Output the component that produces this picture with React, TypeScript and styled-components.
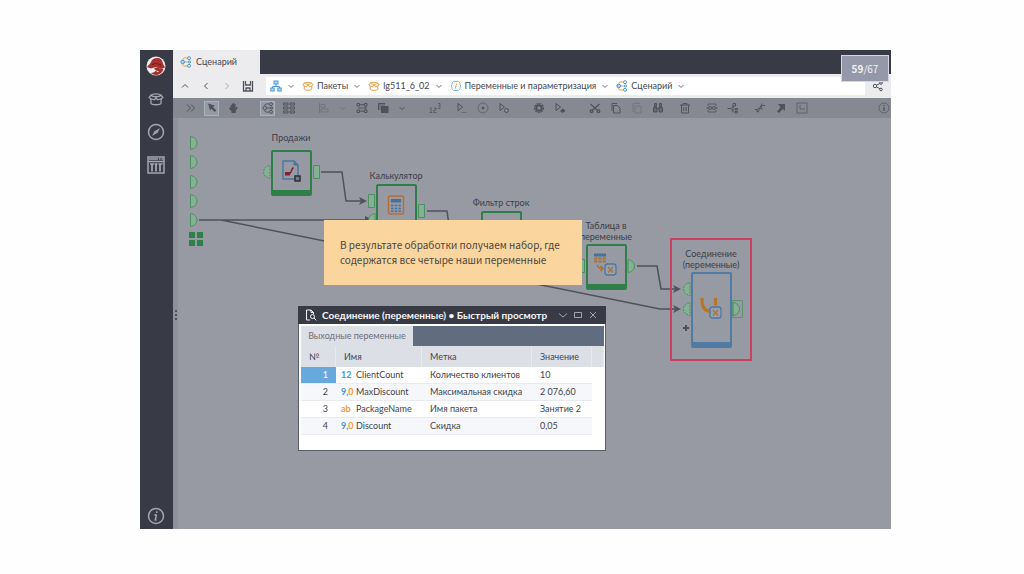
import React from 'react';
import styled, { createGlobalStyle, css } from 'styled-components';

const c = {
  dark: '#383a45',
  canvas: '#979aa3',
  toolbar: '#868991',
  ink: '#4f525d',
  label: '#3b3d47',
  green: '#2f8048',
  port: '#84b094',
  orange: '#e9a04c',
  blue: '#4b97cf',
};

const GlobalStyle = createGlobalStyle`
  *, *::before, *::after { box-sizing: border-box; }
  body {
    margin: 0;
    background: #fefefe;
    font-family: Lato, "Noto Sans", sans-serif;
    font-size: 9px;
    line-height: 12px;
    color: #44464f;
  }
  button { font: inherit; color: inherit; border: 0; background: none; padding: 0; cursor: pointer; }
  svg { display: block; flex: none; }
`;

const Slide = styled.main`
  min-height: 100vh;
  padding: 50px 133px 45px 140px;
  display: flex;
`;

const Shell = styled.div`
  position: relative;
  flex: 1;
  min-width: 0;
  display: flex;
  background: ${c.canvas};
`;

const Sidebar = styled.nav`
  flex: none;
  width: 33px;
  padding: 6px 1px 3px 0;
  display: flex;
  flex-direction: column;
  align-items: center;
  gap: 13px;
  background: ${c.dark};
  color: #a3a6b0;
`;

const SideButton = styled.button<{ $last?: boolean }>`
  width: 20px;
  height: 20px;
  display: grid;
  place-items: center;
  ${p => p.$last && css`margin-top: auto;`}
`;

const Main = styled.div`
  flex: 1;
  min-width: 0;
  display: flex;
  flex-direction: column;
`;

const TabBar = styled.div`
  height: 24px;
  display: flex;
  background: ${c.dark};
`;

const ScenarioTab = styled.button`
  width: 87px;
  padding: 0 7px;
  display: flex;
  align-items: center;
  gap: 4px;
  background: #ececee;
`;

const NavBar = styled.div`
  height: 24px;
  padding: 3px 0 3px 4px;
  display: flex;
  align-items: center;
  background: #ececee;
`;

const NavButton = styled.button<{ $faded?: boolean }>`
  width: 15px;
  height: 15px;
  margin-right: 6px;
  display: grid;
  place-items: center;
  color: ${p => (p.$faded ? '#a9abb1' : '#50535d')};
`;

const Crumbs = styled.div`
  flex: 1;
  height: 18px;
  margin: 0 5px 0 5px;
  padding-left: 4px;
  display: flex;
  align-items: center;
  gap: 7px;
  background: #fff;
`;

const Crumb = styled.button`
  display: flex;
  align-items: center;
  gap: 3px;
  white-space: nowrap;
`;

const CrumbChevron = styled.span`
  margin-left: 2px;
  color: #6c6f78;
`;

const Toolbar = styled.div`
  height: 20px;
  padding: 0 0 0 10px;
  display: flex;
  align-items: center;
  gap: 6px;
  background: ${c.toolbar};
  color: ${c.ink};
`;

const Tool = styled.button<{ $gap?: number; $boxed?: boolean; $faded?: boolean; $narrow?: boolean; $end?: boolean }>`
  flex: none;
  width: ${p => (p.$narrow ? 11 : 15)}px;
  height: 15px;
  margin-left: ${p => (p.$end ? 'auto' : `${p.$gap ?? 0}px`)};
  display: grid;
  place-items: center;
  opacity: ${p => (p.$faded ? 0.35 : 1)};
  ${p => p.$boxed && css`
    background: #969aa3;
    outline: 1px solid #a6b3bd;
    outline-offset: -1px;
  `}
`;

const Workspace = styled.div`
  flex: 1;
  display: flex;
`;

const Grip = styled.div`
  flex: none;
  width: 5px;
  padding-bottom: 18px;
  display: grid;
  place-items: center;
  background: #8f929b;
  color: ${c.ink};
`;

const Canvas = styled.div`
  position: relative;
  flex: 1;
  min-width: 0;
`;

const Wires = styled.svg`
  position: absolute;
  left: 0;
  top: 0;
`;

const Node = styled.div<{ $x: number; $y: number; $gap?: number }>`
  position: absolute;
  left: ${p => p.$x}px;
  bottom: calc(100% - ${p => p.$y}px);
  width: 80px;
  display: flex;
  flex-direction: column;
  align-items: center;
  gap: ${p => p.$gap ?? 3}px;
  color: ${c.label};
`;

const NodeLabel = styled.div`
  line-height: 11px;
  text-align: center;
  white-space: pre;
`;

const NodeBox = styled.div<{ $tall?: boolean }>`
  width: 41px;
  height: ${p => (p.$tall ? 76 : 46)}px;
  display: grid;
  place-items: center;
  border: 2px solid ${p => (p.$tall ? '#4f7ba5' : c.green)};
  border-bottom-width: 6px;
  border-radius: 2px;
`;

const Highlight = styled.div`
  position: absolute;
  left: 492px;
  top: 120px;
  width: 82px;
  height: 123px;
  border: 2px solid #c9415f;
`;

const Callout = styled.p`
  position: absolute;
  left: 146px;
  top: 102px;
  width: 258px;
  height: 65px;
  margin: 0;
  padding: 17px 16px;
  background: #fad59e;
  color: #4b4740;
  font-family: "Noto Sans CJK SC", "Noto Sans", sans-serif;
  font-size: 10px;
  line-height: 15px;
  white-space: nowrap;
`;

const Counter = styled.div`
  position: absolute;
  right: 2px;
  top: 5px;
  width: 48px;
  height: 27px;
  display: flex;
  align-items: center;
  justify-content: center;
  border: 1px solid #d5d7e0;
  background: #9498a9;
  color: #f2f3f6;
  font-family: "Noto Sans CJK SC", "Noto Sans", sans-serif;
  font-size: 10px;
`;

const QuickView = styled.section`
  position: absolute;
  left: 120px;
  top: 188px;
  width: 308px;
  height: 145px;
  border: 1px solid #5a5d69;
  border-top: 0;
  background: #fff;
`;

const QuickHeader = styled.header`
  height: 18px;
  margin: 0 -1px;
  padding: 0 8px 0 7px;
  display: flex;
  align-items: center;
  gap: 5px;
  background: ${c.dark};
  color: #f4f5f8;
`;

const QuickTitle = styled.h2`
  flex: 1;
  margin: 0;
  font-size: 10px;
  font-weight: 700;
  line-height: 16px;
  white-space: nowrap;
`;

const WindowButton = styled.button`
  width: 10px;
  height: 14px;
  display: grid;
  place-items: center;
  color: #a3a5ae;
`;

const QuickTabs = styled.div`
  height: 20px;
  margin: 2px 1px 0 2px;
  display: flex;
  background: #616c80;
`;

const QuickTab = styled.button`
  width: 112px;
  background: #dddfe6;
  color: #6b6e78;
  white-space: nowrap;
`;

const Table = styled.table`
  width: calc(100% - 3px);
  margin: 0 1px 0 2px;
  border-collapse: separate;
  border-spacing: 0;
  table-layout: fixed;
  color: #42444c;
`;

const Th = styled.th<{ $w?: number }>`
  width: ${p => (p.$w ? `${p.$w}px` : 'auto')};
  height: 21px;
  padding: 0 8px;
  text-align: left;
  font-weight: 400;
  background: #dddfe7;
  border-right: 1px solid #e8eaef;
`;

const Row = styled.tr`
  &:nth-child(even) td:not(:last-child) { background: #f5f7fa; }
`;

const Td = styled.td<{ $selected?: boolean; $number?: boolean; $filler?: boolean }>`
  height: 17px;
  padding: 0 ${p => (p.$filler ? 0 : 8)}px 0;
  border-bottom: ${p => (p.$filler ? 'none' : '1px solid #e9ebee')};
  white-space: nowrap;
  ${p => p.$number && css`text-align: right;`}
  ${p => p.$selected && css`background: #67a9dd; color: #fff;`}
`;

const NameCell = styled.div`
  display: flex;
  align-items: center;
  margin-left: -3px;
`;

const TypeMark = styled.span`
  width: 15px;
  font-weight: 700;
`;

const Tint = styled.span<{ $color: string }>`
  color: ${p => p.$color};
`;

type IconProps = { children: React.ReactNode; size?: number; box?: number; w?: number };
const Icon = ({ children, size = 12, box = 12, w = 1 }: IconProps) => (
  <svg width={size} height={size} viewBox={`0 0 ${box} ${box}`} fill="none" stroke="currentColor" strokeWidth={w} aria-hidden="true">
    {children}
  </svg>
);

const Chevron = ({ d = 'M1.5 3 4 5.5 6.5 3' }: { d?: string }) => <Icon size={8} box={8}><path d={d} /></Icon>;

const FlowIcon = ({ plain }: { plain?: boolean }) => (
  <Icon>
    <path d="M2.500 3.800C3 2 4.500 1.500 7 2M5 6h3M2.500 8.200c.5 1.800 2 2.300 4.500 1.800" stroke={plain ? 'currentColor' : c.orange} />
    <g stroke={plain ? 'currentColor' : c.blue}>
      <circle cx="2.700" cy="6" r="1.800" fill={plain ? 'none' : '#a9d3f0'} />
      <circle cx="9" cy="2.200" r="1.500" />
      <circle cx="9.500" cy="6" r="1.100" />
      <circle cx="9" cy="9.800" r="1.500" />
    </g>
  </Icon>
);

const BoxIcon = ({ color = 'currentColor', size = 12 }: { color?: string; size?: number }) => (
  <Icon size={size}>
    <g stroke={color} strokeLinejoin="round" strokeLinecap="round">
      <path d="M2.200 6v3.200C3 10.700 9 10.700 9.800 9.200V6" />
      <path d="M2.200 3.200C3.500 1.800 8.500 1.800 9.800 3.200" />
      <path d="M2.200 3.200.8 5c1 1.200 3 1.500 4.200 1.400L6 4.900l1 1.500c1.200.1 3.200-.2 4.200-1.400L9.800 3.200C8.500 4.700 3.500 4.700 2.200 3.200z" />
    </g>
  </Icon>
);

const TreeIcon = () => (
  <Icon>
    <g stroke={c.blue}>
      <rect x="4" y="1" width="4" height="3" fill="#bcdcf2" />
      <path d="M6 4v2.500M2.500 8V6.500h7V8" />
      <rect x=".8" y="8" width="3.400" height="3" fill="#bcdcf2" />
      <rect x="7.800" y="8" width="3.400" height="3" fill="#bcdcf2" />
    </g>
  </Icon>
);

const ModuleIcon = () => (
  <Icon>
    <path d="M3.500 1.500h5L10 3v2l1 1-1 1v2l-1.500 1.500h-5L2 9V7L1 6l1-1V3z" stroke="#86bde3" />
    <path d="M6.800 3.500 5.200 8.500" stroke={c.orange} />
  </Icon>
);

const Logo = () => (
  <svg width="20" height="20" viewBox="0 0 20 20" aria-hidden="true">
    <circle cx="10" cy="10" r="9.500" fill="#f1eeee" />
    <path d="M1 11C2 9 4 8.500 5 6c1-3 4-4.500 7-4 3.500.5 4.500 3 5 5.500.3 1.500 1.500 2.500 2 4l-4 1.500-5-2-5 1.500z" fill="#a8302c" />
    <path d="M8 12.500c2-1.500 4-1 6 0l3.500.5c-1 3.500-4 6-7.500 6-2 0-4-1-5-2 2 0 4-1 5-2.500z" fill="#a33531" />
    <path d="M6 8.500c3-1.500 6-1 9 .5" stroke="#6f1a19" fill="none" />
    <path d="m10 14.500 3 .8-1.500 1z" fill="#f1eeee" />
  </svg>
);

const Compass = () => (
  <Icon size={18} box={18} w={1.5}>
    <circle cx="9" cy="9" r="7.500" />
    <path d="m13 5-2.700 5.300L8 8z M5 13l2.700-5.300L10 10z" fill="currentColor" stroke="none" />
  </Icon>
);

const Report = () => (
  <Icon size={18} box={18} w={1.5}>
    <rect x="1" y="1" width="16" height="16" />
    <path d="M2 3h9M12 3h1.500M14.500 3H16" strokeWidth="1.500" />
    <path d="M1 5.500h16" />
    <path d="M5 8v7.500M9 8v7.500M13 8v7.500" strokeWidth="1.800" />
    <path d="M3 8h4M7.500 8h3M11.500 8h4" />
  </Icon>
);

const Save = () => (
  <Icon size={12}>
    <path d="M1.500 1v10h9V1M3.500 1v4h5V1M4 11V8h4v3" strokeWidth="1.300" />
  </Icon>
);

const Share = () => (
  <Icon size={12}>
    <circle cx="3" cy="6" r="1.700" />
    <circle cx="9" cy="3" r="1.300" />
    <circle cx="9" cy="9.500" r="1.300" />
    <path d="m4.500 5.200 3.300-1.600M4.500 6.900 8 8.800" />
  </Icon>
);

type ToolItem = { name: string; icon: React.ReactNode; gap?: number; boxed?: boolean; faded?: boolean; narrow?: boolean; end?: boolean };

const tools: ToolItem[] = [
  { name: 'Развернуть', icon: <Icon><path d="m2 2.500 3.500 3.500L2 9.500M6 2.500 9.500 6 6 9.500" /></Icon> },
  { name: 'Выделение', boxed: true, icon: <Icon><path d="M2 1.500 9 3.800 7 5l3.300 3.500-1.600 1.600L5.400 6.800 4.200 8.700z" fill="currentColor" stroke="none" /></Icon> },
  { name: 'Перемещение', icon: <Icon><path d="M3.500 6V3.200h1.200V1.700h1.300V1h1.300v1h1.200v3.500l1.500-.7.700.7-2 3.500v2H4.500V9.200L2 6.500l.7-1z" fill="currentColor" stroke="none" /></Icon> },
  { name: 'Схема', gap: 14, boxed: true, icon: <FlowIcon plain /> },
  { name: 'Список', icon: <Icon><path d="M.5 1h4.500v2H.5zM7 1h4.500v2H7zM.5 5h4.500v2H.5zM7 5h4.500v2H7zM.5 9h4.500v2H.5zM7 9h4.500v2H7z" /></Icon> },
  { name: 'Выравнивание', gap: 14, faded: true, icon: <Icon><path d="M1.500 1v10M3 2.500h4v3H3zM3 7h7v3H3z" /></Icon> },
  { name: 'Варианты выравнивания', narrow: true, faded: true, icon: <Chevron /> },
  { name: 'Упорядочить', icon: <Icon><path d="M1 1.500h2.500V4H1zM8.500 1.500H11V4H8.500zM1 8h2.500v2.500H1zM8.500 8H11v2.500H8.500zM3.500 2.700h5M3.500 9.200h5M2.200 6h7.600M9.800 4v4" /></Icon> },
  { name: 'Слои', icon: <Icon><path d="M1.500 8V1.500H8" /><path d="M2 2h6v2H4v4H2z" fill="currentColor" opacity=".4" stroke="none" /><rect x="4.500" y="4.500" width="6.500" height="6" fill="currentColor" /></Icon> },
  { name: 'Варианты слоёв', narrow: true, icon: <Chevron /> },
  { name: 'Порядок выполнения', gap: 14, icon: <Icon><path d="M2 5.500v5M.5 10.500h3M5 6h2v2H5v2.500h2.500M9 1.500h2v5H9M9.500 4H11M1 6.500 2 5.500" opacity=".8" /></Icon> },
  { name: 'Выполнить', gap: 6, icon: <Icon><path d="M2 1.500v7l4.500-3.500zM5.500 10.500h1M7.500 10.500h1M9.500 10.500h1" /></Icon> },
  { name: 'Остановить', icon: <Icon><circle cx="6" cy="6" r="5" opacity=".6" /><circle cx="6" cy="6" r="1" fill="currentColor" /></Icon> },
  { name: 'Переобучить', icon: <Icon><path d="M2 1.500v7l4.500-3.500z" /><circle cx="8.500" cy="8.500" r="2" /></Icon> },
  { name: 'Настроить', gap: 14, icon: <Icon><circle cx="6" cy="6" r="4.500" strokeWidth="1.200" strokeDasharray="2 1" /><circle cx="6" cy="6" r="2.800" strokeWidth="2" /></Icon> },
  { name: 'Режим активации', icon: <Icon><path d="M2 1.500v7l4.500-3.500z" /><path d="M6.500 9 9 6.800l2 2-2.500 1.700z" fill="currentColor" /></Icon> },
  { name: 'Вырезать', gap: 14, icon: <Icon w={1.3}><path d="m1.500 2 7.200 6.500M10.500 2 3.300 8.500" /><circle cx="2.500" cy="9.200" r="1.300" /><circle cx="9.500" cy="9.200" r="1.300" /></Icon> },
  { name: 'Копировать', icon: <Icon><path d="M3.500 3.500h4L10 6v5H3.500zM2 9V1.500h5" /></Icon> },
  { name: 'Вставить', faded: true, icon: <Icon><path d="M4 4h6v7H4zM2 10V1.500h7" /></Icon> },
  { name: 'Найти', icon: <Icon><path d="M2.500 1.500h2v3h-2zM7.500 1.500h2v3h-2zM1.500 5.500H5V10H1.500zM7 5.500h3.500V10H7zM5 6.500h2" fill="currentColor" fillOpacity=".6" /></Icon> },
  { name: 'Удалить', gap: 6, icon: <Icon><path d="M1 3h10M4 3V1.500h4V3M2.500 3v8h7V3M4.800 5v4M7.200 5v4" /></Icon> },
  { name: 'Подмодель', gap: 6, icon: <Icon><path d="M2 4V2h8v2M2 8v2h8V8" opacity=".8" /><circle cx="4" cy="6" r="1.500" /><circle cx="8" cy="6" r="1.500" /><path d="M0 6h2.500M5.500 6h1M9.500 6H12" /></Icon> },
  { name: 'Развернуть подмодель', icon: <Icon><path d="M.5 6.500h3.500M4 6.500 6 4.500M6 1.500h2.500V4H6zM6 4v4M4 8h2v2.500M8 6.500h2.500v1.500H8zM8 9.500h2.500V11H8z" /></Icon> },
  { name: 'Разорвать связь', gap: 6, icon: <Icon><path d="M1 7.500h2.500L5 5.500M7 5l1.500-1.500H11M4 10.500l4-9M3 7.500v2h2M7 5v2h1.500" /></Icon> },
  { name: 'Ссылка', icon: <Icon><path d="M3 2h7v7L8 7l-4 4-2-1.500L5.500 5.200z" fill="currentColor" stroke="none" /></Icon> },
  { name: 'Область', icon: <Icon><path d="M1 1h10v10H1z" opacity=".7" /><path d="M4 3v4h5" opacity=".7" /></Icon> },
  { name: 'Сведения', end: true, icon: <Icon><circle cx="6" cy="6" r="5" opacity=".7" /><path d="M6 5.300v3.500M6 3v1.200" strokeWidth="1.400" /></Icon> },
];

const crumbs = [
  { text: '', icon: <TreeIcon />, name: 'Дерево' },
  { text: 'Пакеты', icon: <BoxIcon color={c.orange} /> },
  { text: 'lg511_6_02', icon: <BoxIcon color={c.orange} /> },
  { text: 'Переменные и параметризация', icon: <ModuleIcon /> },
  { text: 'Сценарий', icon: <FlowIcon /> },
];

const FileNodeIcon = () => (
  <svg width="20" height="22" viewBox="0 0 20 22" fill="none" aria-hidden="true">
    <path d="M2 1h11l4 4v14H2z" stroke="#47759f" strokeWidth="1.300" />
    <path d="M13 1v4h4" fill="#47759f" stroke="#47759f" />
    <path d="M12.500 7.500C10 9 10.500 13 8.500 14" stroke="#84202f" strokeWidth="1.500" />
    <path d="M4 12h5v3.500H4z" fill="#84202f" />
    <rect x="14" y="16" width="5" height="5" fill="#777b85" stroke="#2c2e37" strokeWidth="1.500" />
  </svg>
);

const CalculatorNodeIcon = () => (
  <svg width="18" height="20" viewBox="0 0 18 20" fill="none" aria-hidden="true">
    <rect x="1.500" y="1" width="15" height="18" rx="1.500" stroke="#b66f36" strokeWidth="1.500" />
    <path d="M4 4h10v3.500H4z" fill="#47719b" />
    <path d="M4 10.500h10M4 13.500h10M4 16.300h10" stroke="#47719b" strokeWidth="1.600" strokeDasharray="2.500 1.200" />
  </svg>
);

const VariableMark = () => (
  <>
    <rect x="11" y="11" width="11" height="11" rx="2.500" stroke="#4979a6" strokeWidth="1.300" fill="#9c9fa7" />
    <path d="m14 14 5 5.500M19 14l-5 5.500" stroke="#a9713b" strokeWidth="1.300" />
  </>
);

const TableNodeIcon = () => (
  <svg width="24" height="24" viewBox="0 0 24 24" fill="none" aria-hidden="true">
    <path d="M0 .5h12v3H0z" fill="#47719b" />
    <path d="M0 5.500h12M0 8.500h12" stroke="#a9713b" strokeWidth="1.800" strokeDasharray="3.300 1" />
    <path d="M3.500 11.500c0 3 1.500 4 5 4M6.500 13l2.500 2.500L6.500 18" stroke="#a9713b" strokeWidth="1.500" />
    <VariableMark />
  </svg>
);

const JoinNodeIcon = () => (
  <svg width="24" height="24" viewBox="0 0 24 24" fill="none" aria-hidden="true">
    <path d="M3 2c-.5 7 1.500 12 7 13.500" stroke="#b4762c" strokeWidth="3.200" />
    <path d="M16.500 2v7.500" stroke="#b4762c" strokeWidth="3.200" />
    <VariableMark />
  </svg>
);

const halfRight = (x: number, y: number) => `M${x} ${y - 6.5}v13c4-.5 6.500-3.500 6.500-6.500s-2.500-6-6.500-6.500z`;
const halfLeft = (x: number, y: number) => `M${x} ${y - 6.5}v13c-4-.5-6.500-3.500-6.500-6.500s2.500-6 6.500-6.500z`;

const Diagram = () => (
  <Wires width="713" height="411" viewBox="0 0 713 411" fill="none" aria-hidden="true">
    <g stroke="#50525b" strokeWidth="1.500" strokeLinejoin="round">
      <path d="M143 54h21l4 29h16" />
      <path d="M21 102h167M21 102h22l439 89h16" />
      <path d="M249 93h20l4 28" />
      <path d="M459 148h20l4 23h15" />
    </g>
    <g fill="#50525b">
      <path d="m181 79 8 4-8 4 2-4zM187 98l8 4-8 4zM495 167l8 4-8 4 2-4zM495 187l8 4-8 4 2-4z" />
    </g>
    <g fill={c.port} stroke="#4f8d63">
      {[25, 44, 64, 83, 102].map(y => <path key={y} d={halfRight(12.5, y)} />)}
      <path d={halfLeft(92, 54)} strokeDasharray="2 1" />
      <path d="M135.500 47.500h6v13h-6zM190.500 76.500h6v13h-6zM240.500 86.500h6v13h-6zM400.500 141.500h6v13h-6z" />
      <path d={halfLeft(197, 102)} />
      <path d={halfRight(450, 148)} />
      <path d={halfLeft(512, 171)} strokeDasharray="2 1" />
      <path d={halfLeft(512, 191)} strokeDasharray="2 1" />
      <path d={halfRight(555, 191)} />
    </g>
    <path d="M554.500 182.500h10v17h-10z" stroke="#5c9472" />
    <path d="M11 114h6v6h-6zM19 114h6v6h-6zM11 122h6v6h-6zM19 122h6v6h-6z" fill={c.green} />
    <path d="M508 207v6M505 210h6" stroke="#50525b" strokeWidth="2" />
  </Wires>
);

const nodes = [
  { label: 'Продажи', x: 73, y: 78, gap: 7, icon: <FileNodeIcon /> },
  { label: 'Калькулятор', x: 178, y: 112, icon: <CalculatorNodeIcon /> },
  { label: 'Фильтр строк', x: 283, y: 139, icon: null },
  { label: 'Таблица в\nпеременные', x: 388, y: 172, gap: 2, icon: <TableNodeIcon /> },
  { label: 'Соединение\n(переменные)', x: 493, y: 230, gap: 2, icon: <JoinNodeIcon />, tall: true },
];

const Real = () => <><Tint $color={c.blue}>9,</Tint><Tint $color="#f09a3e">0</Tint></>;

const variables = [
  { type: <Tint $color={c.blue}>12</Tint>, name: 'ClientCount', label: 'Количество клиентов', value: '10' },
  { type: <Real />, name: 'MaxDiscount', label: 'Максимальная скидка', value: '2 076,60' },
  { type: <Tint $color="#f09a3e">ab</Tint>, name: 'PackageName', label: 'Имя пакета', value: 'Занятие 2' },
  { type: <Real />, name: 'Discount', label: 'Скидка', value: '0,05' },
];

export default function App() {
  return (
    <>
      <GlobalStyle />
      <Slide>
        <Shell>
          <Sidebar>
            <SideButton aria-label="Главная"><Logo /></SideButton>
            <SideButton aria-label="Пакеты"><BoxIcon size={16} /></SideButton>
            <SideButton aria-label="Навигация"><Compass /></SideButton>
            <SideButton aria-label="Отчёты"><Report /></SideButton>
            <SideButton aria-label="О программе" $last>
              <Icon size={18} box={18} w={1.5}>
                <circle cx="9" cy="9" r="7.500" />
                <path d="M9.500 7.500 8.300 13M7.500 7.700h2M7.500 13h2M9.700 4.300v1.600" />
              </Icon>
            </SideButton>
          </Sidebar>
          <Main>
            <TabBar role="tablist">
              <ScenarioTab role="tab" aria-selected="true"><FlowIcon />Сценарий</ScenarioTab>
            </TabBar>
            <NavBar>
              <NavButton aria-label="Вверх"><Chevron d="M1 5.500 4 2.500l3 3" /></NavButton>
              <NavButton aria-label="Назад"><Chevron d="M5.500 1 2.500 4l3 3" /></NavButton>
              <NavButton aria-label="Вперёд" $faded><Chevron d="m2.500 1 3 3-3 3" /></NavButton>
              <NavButton aria-label="Сохранить"><Save /></NavButton>
              <Crumbs>
                {crumbs.map(item => (
                  <Crumb key={item.text} aria-label={item.name}>
                    {item.icon}
                    {item.text}
                    <CrumbChevron><Chevron /></CrumbChevron>
                  </Crumb>
                ))}
              </Crumbs>
              <NavButton aria-label="Поделиться"><Share /></NavButton>
            </NavBar>
            <Toolbar>
              {tools.map(t => (
                <Tool key={t.name} aria-label={t.name} $gap={t.gap} $boxed={t.boxed} $faded={t.faded} $narrow={t.narrow} $end={t.end}>
                  {t.icon}
                </Tool>
              ))}
            </Toolbar>
            <Workspace>
              <Grip>
                <svg width="2" height="10" viewBox="0 0 2 10" fill="currentColor" aria-hidden="true">
                  <path d="M0 0h2v2H0zM0 4h2v2H0zM0 8h2v2H0z" />
                </svg>
              </Grip>
              <Canvas>
                <Diagram />
                {nodes.map(n => (
                  <Node key={n.label} $x={n.x} $y={n.y} $gap={n.gap}>
                    <NodeLabel>{n.label}</NodeLabel>
                    <NodeBox $tall={n.tall}>{n.icon}</NodeBox>
                  </Node>
                ))}
                <Highlight />
                <Callout>
                  В результате обработки получаем набор, где<br />
                  содержатся все четыре наши переменные
                </Callout>
                <QuickView>
                  <QuickHeader>
                    <Icon size={12}>
                      <path d="M5 11H1.500V1H6l2.500 2.500V5M6 1v2.500h2.500" />
                      <circle cx="7.500" cy="7.500" r="2" />
                      <path d="m9 9 2.300 2.300" />
                    </Icon>
                    <QuickTitle>Соединение (переменные) • Быстрый просмотр</QuickTitle>
                    <WindowButton aria-label="Свернуть"><Chevron d="M0 2.500 4 6l4-3.500" /></WindowButton>
                    <WindowButton aria-label="Развернуть окно"><Icon size={8} box={8}><path d="M.5 1.500h7v5h-7z" /></Icon></WindowButton>
                    <WindowButton aria-label="Закрыть"><Icon size={8} box={8}><path d="m1 1 6 6M7 1 1 7" /></Icon></WindowButton>
                  </QuickHeader>
                  <QuickTabs role="tablist">
                    <QuickTab role="tab" aria-selected="true">Выходные переменные</QuickTab>
                  </QuickTabs>
                  <Table>
                    <thead>
                      <tr>
                        <Th $w={35}>№</Th>
                        <Th $w={86}>Имя</Th>
                        <Th $w={110}>Метка</Th>
                        <Th $w={60}>Значение</Th>
                        <Th aria-hidden="true" />
                      </tr>
                    </thead>
                    <tbody>
                      {variables.map((v, i) => (
                        <Row key={v.name}>
                          <Td $number $selected={i === 0}>{i + 1}</Td>
                          <Td><NameCell><TypeMark>{v.type}</TypeMark>{v.name}</NameCell></Td>
                          <Td>{v.label}</Td>
                          <Td>{v.value}</Td>
                          <Td $filler />
                        </Row>
                      ))}
                    </tbody>
                  </Table>
                </QuickView>
              </Canvas>
            </Workspace>
          </Main>
          <Counter><b>59</b>/67</Counter>
        </Shell>
      </Slide>
    </>
  );
}
